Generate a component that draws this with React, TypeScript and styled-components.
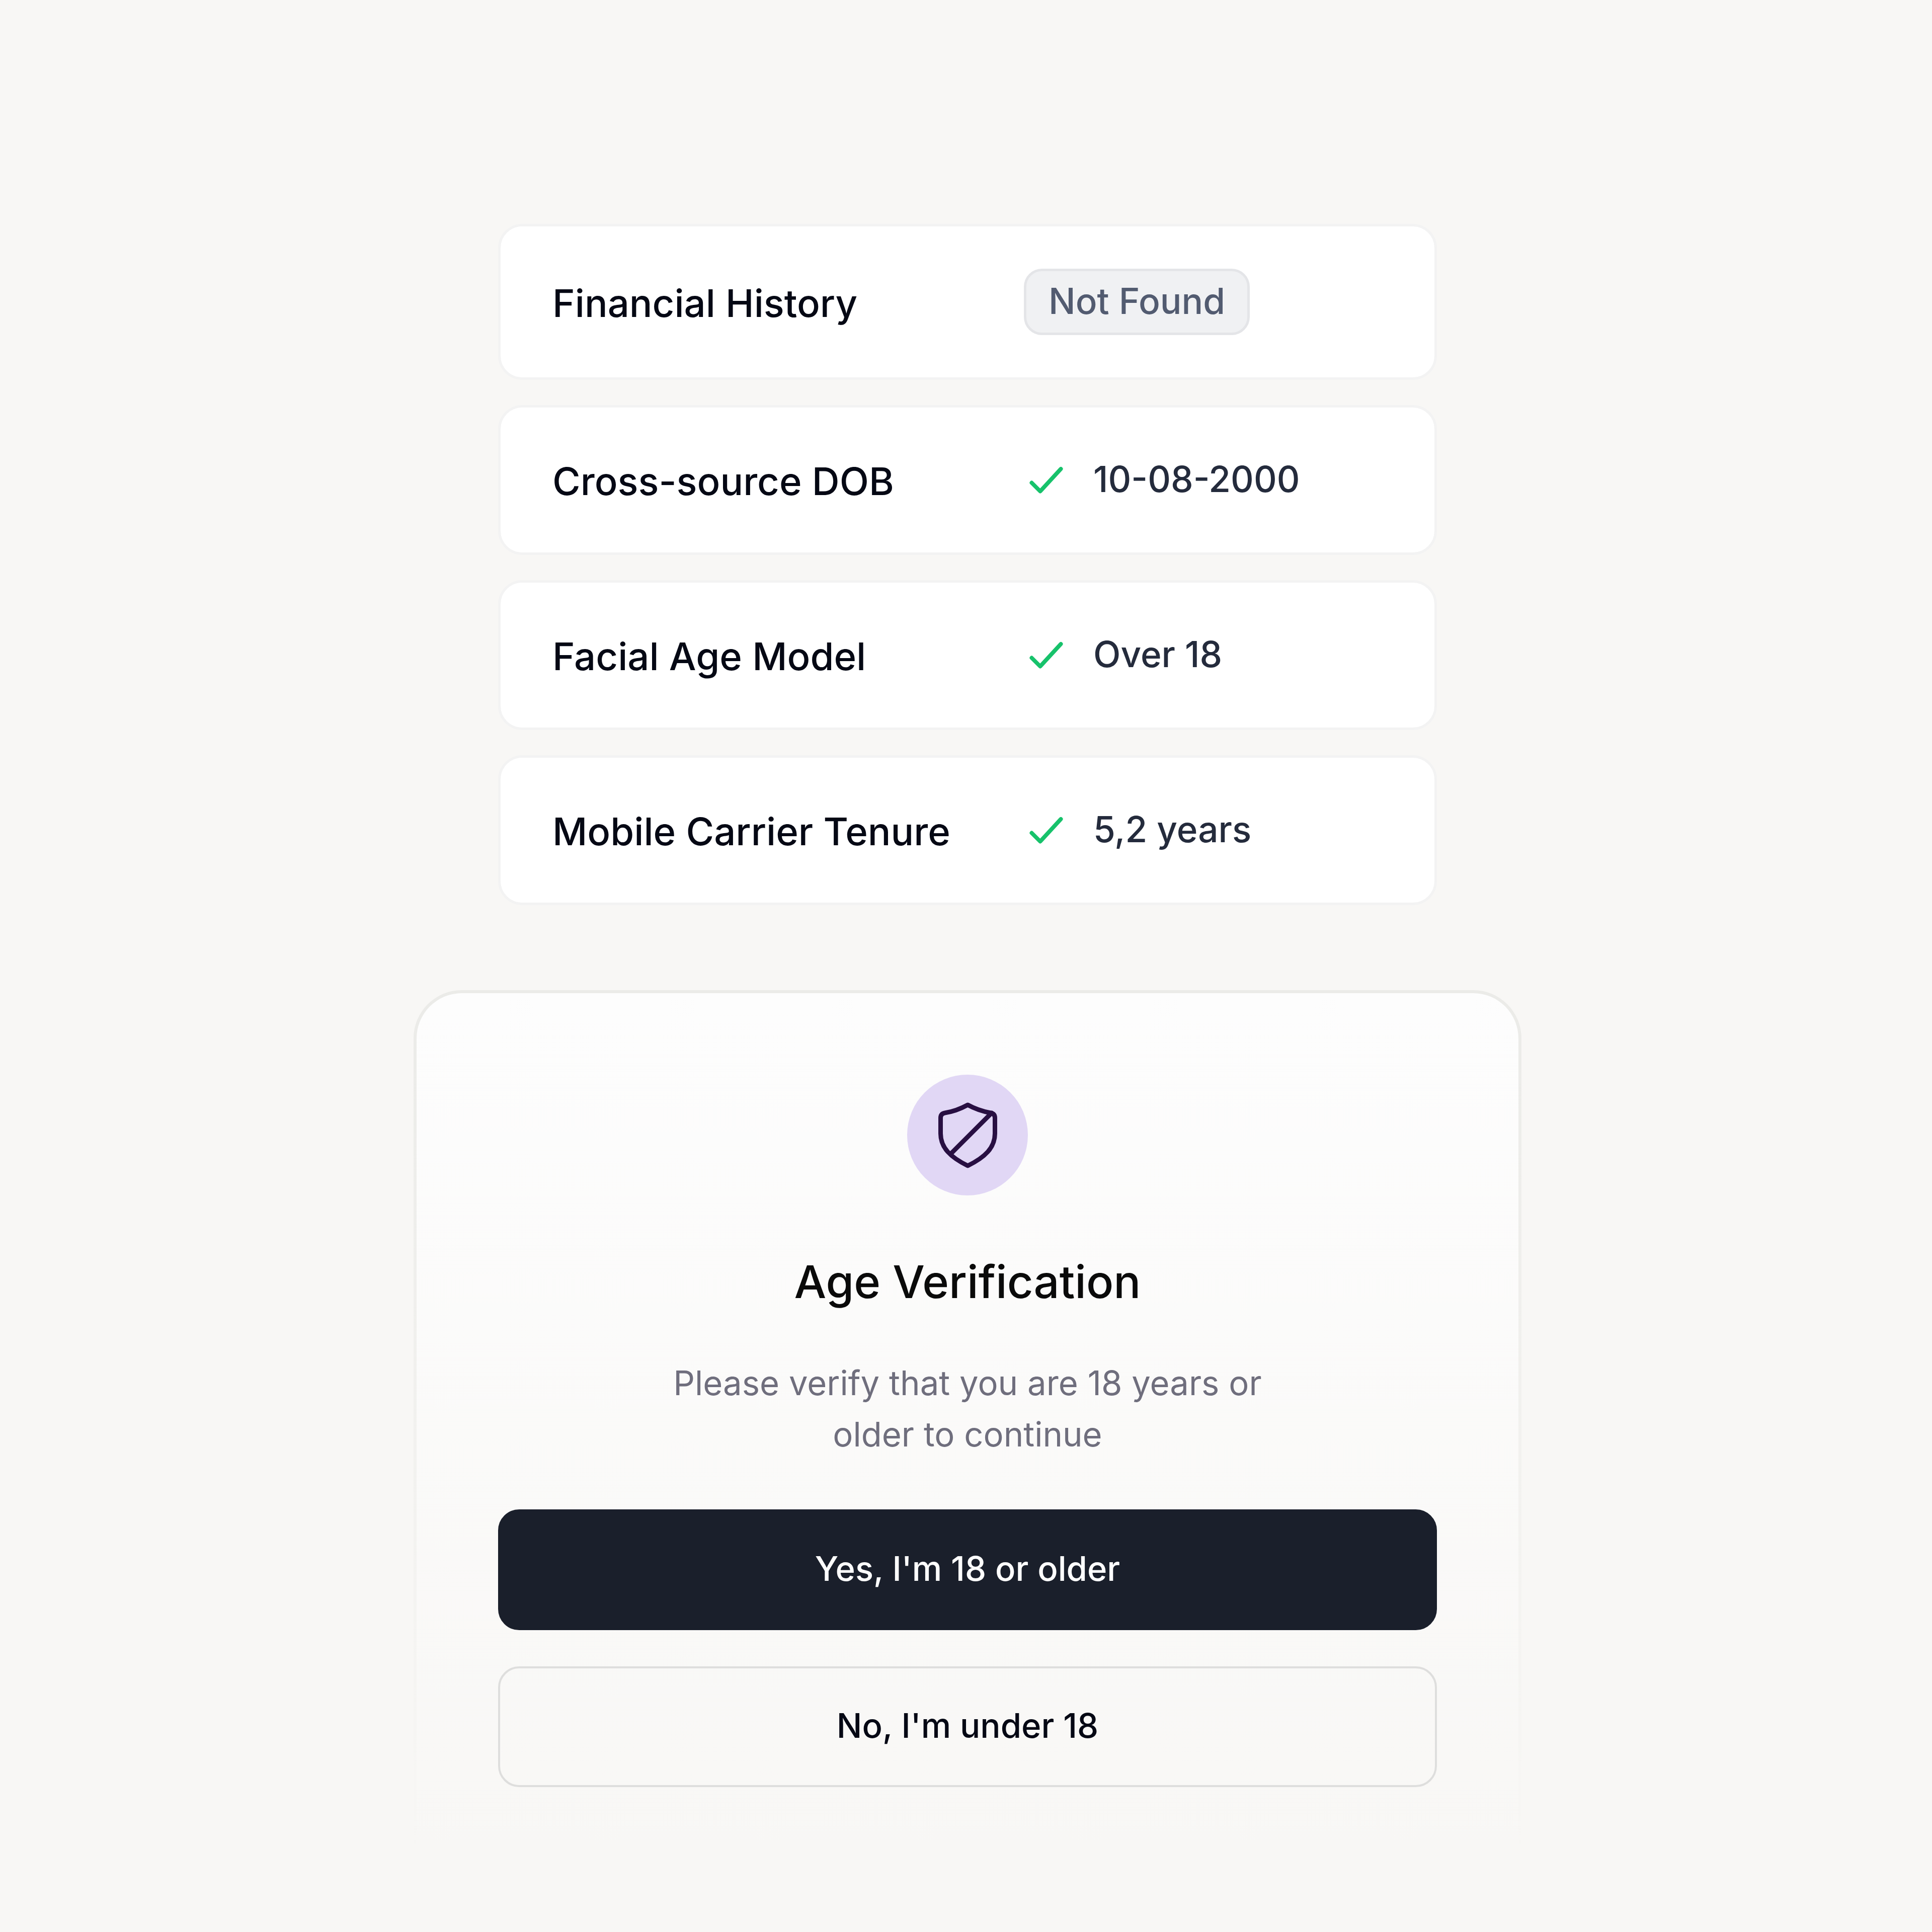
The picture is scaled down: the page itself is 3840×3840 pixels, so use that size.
import React from "react";
import styled, { createGlobalStyle, css } from "styled-components";

const color = {
  page: "#f8f7f5",
  card: "#ffffff",
  cardBorder: "#f3f3f3",
  panel: "#fdfdfd",
  panelBorder: "#ebebe8",
  label: "#050814",
  value: "#242b3c",
  badgeText: "#525b70",
  badge: "#f0f1f3",
  badgeBorder: "#e4e5e8",
  success: "#17c26b",
  lilac: "#e1d7f5",
  plum: "#280f42",
  title: "#0a0a0a",
  muted: "#6f6e7d",
  ink: "#1a1f2b",
  outline: "#dededd",
};

const GlobalStyle = createGlobalStyle`
  *, *::before, *::after {
    box-sizing: border-box;
  }
  body {
    margin: 0;
    background: ${color.page};
    font-family: Inter, "Liberation Sans", sans-serif;
    font-weight: 500;
  }
`;

const Page = styled.main`
  display: flex;
  flex-direction: column;
  align-items: center;
  gap: 169px;
  min-height: 100vh;
  padding: 445px 0 144px 6px;
`;

const CheckList = styled.dl`
  display: flex;
  flex-direction: column;
  gap: 50px;
  width: 100%;
  max-width: 1866px;
  margin: 0;
`;

const CheckCard = styled.div`
  display: grid;
  grid-template-columns: minmax(0, 937px) 1fr;
  align-items: center;
  padding: 84px 103px;
  border: 5px solid ${color.cardBorder};
  border-radius: 48px;
  background: ${color.card};
`;

const Label = styled.dt`
  padding-top: 4px;
  font-size: 76px;
  line-height: 100px;
  color: ${color.label};
`;

const Result = styled.dd`
  display: flex;
  align-items: center;
  gap: 58px;
  margin: 0;
`;

const resultText = css`
  padding-bottom: 4px;
  font-size: 71px;
  white-space: nowrap;
`;

const Value = styled.span`
  ${resultText}
  line-height: 116px;
  color: ${color.value};
`;

const Badge = styled.span`
  ${resultText}
  padding-inline: 44px;
  border: 5px solid ${color.badgeBorder};
  border-radius: 36px;
  line-height: 118px;
  color: ${color.badgeText};
  background: ${color.badge};
`;

const Panel = styled.section`
  display: flex;
  flex-direction: column;
  align-items: center;
  width: 100%;
  max-width: 2202px;
  padding: 162px 162px 144px;
  border: 6px solid transparent;
  border-bottom: 0;
  border-radius: 96px 96px 0 0;
  background:
    linear-gradient(${color.panel}, ${color.page}) padding-box,
    linear-gradient(${color.panelBorder}, ${color.page}) border-box;
`;

const IconCircle = styled.div`
  display: grid;
  place-items: center;
  width: 240px;
  height: 240px;
  border-radius: 50%;
  color: ${color.plum};
  background: ${color.lilac};
`;

const Title = styled.h1`
  margin: 112px 0 90px;
  font-size: 90px;
  font-weight: 500;
  line-height: 120px;
  text-align: center;
  color: ${color.title};
`;

const Description = styled.p`
  max-width: 1280px;
  margin: 0 0 98px;
  font-size: 67px;
  font-weight: 400;
  line-height: 102px;
  text-align: center;
  color: ${color.muted};
`;

const Actions = styled.div`
  display: flex;
  flex-direction: column;
  gap: 72px;
  width: 100%;
`;

const Button = styled.button<{ $primary?: boolean }>`
  width: 100%;
  height: 240px;
  padding: 0 48px 4px;
  border: 4px solid ${(p) => (p.$primary ? color.ink : color.outline)};
  border-radius: 42px;
  font: inherit;
  font-size: 67px;
  line-height: 100px;
  color: ${(p) => (p.$primary ? "#ffffff" : color.label)};
  background: ${(p) => (p.$primary ? color.ink : "transparent")};
  cursor: pointer;
`;

const CheckIcon = () => (
  <svg
    width="80"
    height="80"
    viewBox="0 0 80 80"
    fill="none"
    stroke={color.success}
    strokeWidth="8"
    strokeLinecap="round"
    strokeLinejoin="round"
    role="img"
    aria-label="Passed"
  >
    <path d="M15.5 45.5 32.5 62.5 73.5 18" />
  </svg>
);

const ShieldIcon = () => (
  <svg
    width="144"
    height="144"
    viewBox="0 0 144 144"
    fill="none"
    stroke="currentColor"
    strokeWidth="9"
    strokeLinecap="round"
    strokeLinejoin="round"
    aria-hidden="true"
  >
    <path d="M72.5 12C58 20 43 25.5 27 28Q18.500 29.5 18.500 38V69C18.500 97 38 116 72.500 133C107 116 126.500 97 126.500 69V38Q126.500 29.500 118 28C102 25 87 20 72.500 12Z" />
    <path d="M120 28 39 109" />
  </svg>
);

type Check = { label: string; value: string; found: boolean };

const checks: Check[] = [
  { label: "Financial History", value: "Not Found", found: false },
  { label: "Cross-source DOB", value: "10-08-2000", found: true },
  { label: "Facial Age Model", value: "Over 18", found: true },
  { label: "Mobile Carrier Tenure", value: "5,2 years", found: true },
];

export default function App() {
  return (
    <>
      <GlobalStyle />
      <Page>
        <CheckList>
          {checks.map(({ label, value, found }) => (
            <CheckCard key={label}>
              <Label>{label}</Label>
              <Result>
                {found ? (
                  <>
                    <CheckIcon />
                    <Value>{value}</Value>
                  </>
                ) : (
                  <Badge>{value}</Badge>
                )}
              </Result>
            </CheckCard>
          ))}
        </CheckList>
        <Panel>
          <IconCircle>
            <ShieldIcon />
          </IconCircle>
          <Title>Age Verification</Title>
          <Description>Please verify that you are 18 years or older to continue</Description>
          <Actions>
            <Button type="button" $primary>
              Yes, I'm 18 or older
            </Button>
            <Button type="button">No, I'm under 18</Button>
          </Actions>
        </Panel>
      </Page>
    </>
  );
}
